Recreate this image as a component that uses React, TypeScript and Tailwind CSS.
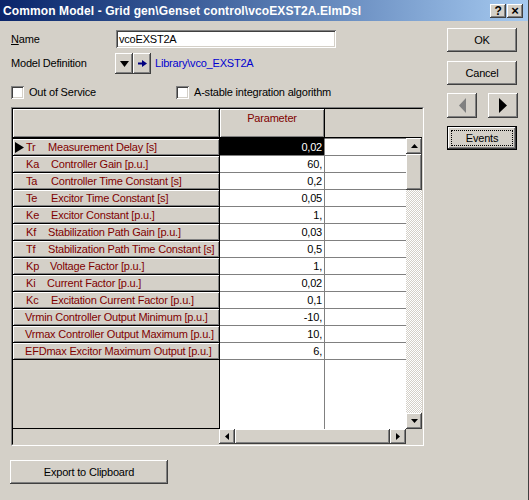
import React from "react";

type Row = { sym?: string; gap?: string; desc: string; val: string };

const rows: Row[] = [
  { sym: "Tr", gap: "w-[22px]", desc: "Measurement Delay [s]", val: "0,02" },
  { sym: "Ka", gap: "w-[25px]", desc: "Controller Gain [p.u.]", val: "60," },
  { sym: "Ta", gap: "w-[25px]", desc: "Controller Time Constant [s]", val: "0,2" },
  { sym: "Te", gap: "w-[25px]", desc: "Excitor Time Constant [s]", val: "0,05" },
  { sym: "Ke", gap: "w-[25px]", desc: "Excitor Constant [p.u.]", val: "1," },
  { sym: "Kf", gap: "w-[22px]", desc: "Stabilization Path Gain [p.u.]", val: "0,03" },
  { sym: "Tf", gap: "w-[22px]", desc: "Stabilization Path Time Constant [s]", val: "0,5" },
  { sym: "Kp", gap: "w-[24px]", desc: "Voltage Factor [p.u.]", val: "1," },
  { sym: "Ki", gap: "w-[21px]", desc: "Current Factor [p.u.]", val: "0,02" },
  { sym: "Kc", gap: "w-[25px]", desc: "Excitation Current Factor [p.u.]", val: "0,1" },
  { desc: "Vrmin Controller Output Minimum [p.u.]", val: "-10," },
  { desc: "Vrmax Controller Output Maximum [p.u.]", val: "10," },
  { desc: "EFDmax Excitor Maximum Output [p.u.]", val: "6," },
];

// classic 3d borders
const raised =
  "bg-[#d4d0c8] shadow-[inset_-1px_-1px_#404040,inset_1px_1px_#ffffff,inset_-2px_-2px_#808080,inset_2px_2px_#d4d0c8]";
const sunken =
  "bg-white shadow-[inset_1px_1px_#808080,inset_-1px_-1px_#ffffff,inset_2px_2px_#404040,inset_-2px_-2px_#d4d0c8]";
const thin = "shadow-[inset_1px_1px_#ffffff,inset_-1px_-1px_#808080]";

const Arrow = ({ dir, color = "#000" }: { dir: "up" | "down" | "left" | "right"; color?: string }) => {
  const pts = {
    up: "0,4 7,4 3.5,0",
    down: "0,0 7,0 3.5,4",
    left: "4,0 4,7 0,3.5",
    right: "0,0 0,7 4,3.5",
  }[dir];
  const vert = dir === "up" || dir === "down";
  return (
    <svg width={vert ? 7 : 4} height={vert ? 4 : 7} viewBox={vert ? "0 0 7 4" : "0 0 4 7"}>
      <polygon points={pts} fill={color} />
    </svg>
  );
};

const Check = () => <div className={`w-[13px] h-[13px] shrink-0 ${sunken}`} />;

export default function App() {
  return (
    <div className="w-[529px] h-[500px] bg-[#d4d0c8] flex flex-col border-r border-r-[#404040] font-['Liberation_Sans',Arial,sans-serif] text-[11px] tracking-[-0.2px] text-black overflow-hidden">
      {/* title bar */}
      <div className="h-[21px] flex items-center bg-linear-to-r from-[#0a246a] to-[#a6caf0] pl-[3px] pr-[5px] shrink-0">
        <span className="text-white font-bold text-[12px] tracking-[0.1px] flex-1 whitespace-nowrap">
          Common Model - Grid gen\Genset control\vcoEXST2A.ElmDsl
        </span>
        <div className={`w-[16px] h-[14px] ${raised} flex items-center justify-center font-bold text-[12px] leading-none`}>?</div>
        <div className={`w-[16px] h-[14px] ml-px ${raised} flex items-center justify-center font-bold text-[13px] leading-none`}>×</div>
      </div>

      <div className="flex">
        {/* left column */}
        <div className="flex flex-col pl-[11px] pt-[9px] w-[424px] shrink-0">
          <div className="flex items-center h-[18px]">
            <span className="w-[105px]">
              <span className="underline">N</span>ame
            </span>
            <div className={`w-[220px] h-[18px] ${sunken} flex items-center pl-[3px]`}>vcoEXST2A</div>
          </div>

          <div className="flex items-center h-[21px] mt-[5px]">
            <span className="w-[104px]">Model Definition</span>
            <div className={`w-[18px] h-[21px] ${raised} flex items-center justify-center`}>
              <svg width="9" height="6" viewBox="0 0 9 6">
                <polygon points="0,0 9,0 4.5,6" fill="#000" />
              </svg>
            </div>
            <div className={`w-[18px] h-[21px] ${raised} flex items-center justify-center`}>
              <svg width="9" height="7" viewBox="0 0 9 7">
                <rect x="0" y="2.5" width="5" height="2" fill="#000080" />
                <polygon points="4,0 9,3.5 4,7" fill="#000080" />
              </svg>
            </div>
            <span className="ml-[4px] text-[#0000d0]">Library\vco_EXST2A</span>
          </div>

          <div className="flex items-center h-[13px] mt-[12px]">
            <div className="flex items-center w-[165px]">
              <Check />
              <span className="ml-[5px]">Out of Service</span>
            </div>
            <Check />
            <span className="ml-[5px]">A-stable integration algorithm</span>
          </div>

          {/* parameter grid */}
          <div className="mt-[8px] w-[413px] h-[339px] border border-t-[#808080] border-l-[#808080] border-r-white border-b-white">
            <div className="w-full h-full border border-t-black border-l-black border-r-[#d4d0c8] border-b-[#d4d0c8] flex flex-col">
              <div className="h-[29px] flex border-b border-black shrink-0">
                <div className={`w-[207px] h-full border-r border-black ${thin}`} />
                <div className={`w-[105px] h-full border-r border-black ${thin} flex justify-center pt-px text-[#800000]`}>
                  Parameter
                </div>
                <div className="flex-1" />
              </div>

              <div className="flex">
                <div className="w-[393px] flex flex-col">
                  {rows.map((r, i) => (
                    <div key={i} className="h-[17px] flex">
                      <div className="w-[207px] border-t border-r border-black">
                        <div className={`h-full flex items-center ${thin} text-[#800000] whitespace-nowrap overflow-hidden`}>
                          <span className={`${r.sym ? "w-[13px]" : "w-[12px]"} shrink-0 flex items-center pl-[2px]`}>
                            {i === 0 && (
                              <svg width="9" height="11" viewBox="0 0 9 11">
                                <polygon points="0,0 9,5.5 0,11" fill="#000" />
                              </svg>
                            )}
                          </span>
                          {r.sym && <span className={`${r.gap} shrink-0`}>{r.sym}</span>}
                          <span>{r.desc}</span>
                        </div>
                      </div>
                      <div
                        className={`w-[105px] border-t border-r border-r-[#808080] flex items-center justify-end pr-[2px] ${
                          i === 0 ? "bg-black text-white border-t-black" : "bg-white border-t-[#808080]"
                        }`}
                      >
                        {r.val}
                      </div>
                      <div className="flex-1 bg-white border-t border-[#808080]" />
                    </div>
                  ))}
                  <div className="h-[70px] flex">
                    <div className="w-[207px] border border-l-0 border-black" />
                    <div className="w-[105px] bg-white border-t border-r border-[#808080]" />
                    <div className="flex-1 bg-white border-t border-[#808080]" />
                  </div>
                </div>

                {/* vertical scrollbar */}
                <div className="w-[16px] h-[291px] flex flex-col">
                  <div className={`h-[16px] ${raised} flex items-center justify-center`}>
                    <Arrow dir="up" />
                  </div>
                  <div className={`h-[36px] ${raised}`} />
                  <div className="flex-1 bg-[repeating-conic-gradient(#d4d0c8_0%_25%,#ffffff_0%_50%)] bg-size-[2px_2px]" />
                  <div className={`h-[16px] ${raised} flex items-center justify-center`}>
                    <Arrow dir="down" />
                  </div>
                </div>
              </div>

              {/* horizontal scrollbar */}
              <div className="h-[15px] flex">
                <div className="w-[206px]" />
                <div className="w-[187px] flex">
                  <div className={`w-[16px] ${raised} flex items-center justify-center`}>
                    <Arrow dir="left" />
                  </div>
                  <div className={`flex-1 ${raised}`} />
                  <div className={`w-[16px] ${raised} flex items-center justify-center`}>
                    <Arrow dir="right" />
                  </div>
                </div>
                <div className="flex-1" />
              </div>
            </div>
          </div>

          <div className={`mt-[14px] -ml-px w-[158px] h-[24px] ${raised} flex items-center justify-center`}>
            Export to Clipboard
          </div>
        </div>

        {/* right column */}
        <div className="flex flex-col pt-[7px] ml-[23px] w-[71px]">
          <div className={`w-[70px] h-[24px] ${raised} flex items-center justify-center`}>OK</div>
          <div className={`w-[70px] h-[24px] mt-[9px] ${raised} flex items-center justify-center`}>Cancel</div>
          <div className="flex gap-[11px] mt-[8px]">
            <div className={`w-[30px] h-[25px] ${raised} flex items-center justify-center`}>
              <svg width="7" height="15" viewBox="0 0 7 15">
                <polygon points="7,0 7,15 0,7.5" fill="#808080" />
              </svg>
            </div>
            <div className={`w-[30px] h-[25px] ${raised} flex items-center justify-center`}>
              <svg width="8" height="15" viewBox="0 0 8 15">
                <polygon points="0,0 0,15 8,7.5" fill="#000" />
              </svg>
            </div>
          </div>
          <div className="w-[70px] h-[24px] mt-[8px] border border-black">
            <div className={`w-full h-full ${raised} p-[3px]`}>
              <div className="w-full h-full border border-dotted border-black flex items-center justify-center">
                Events
              </div>
            </div>
          </div>
        </div>
      </div>
    </div>
  );
}
